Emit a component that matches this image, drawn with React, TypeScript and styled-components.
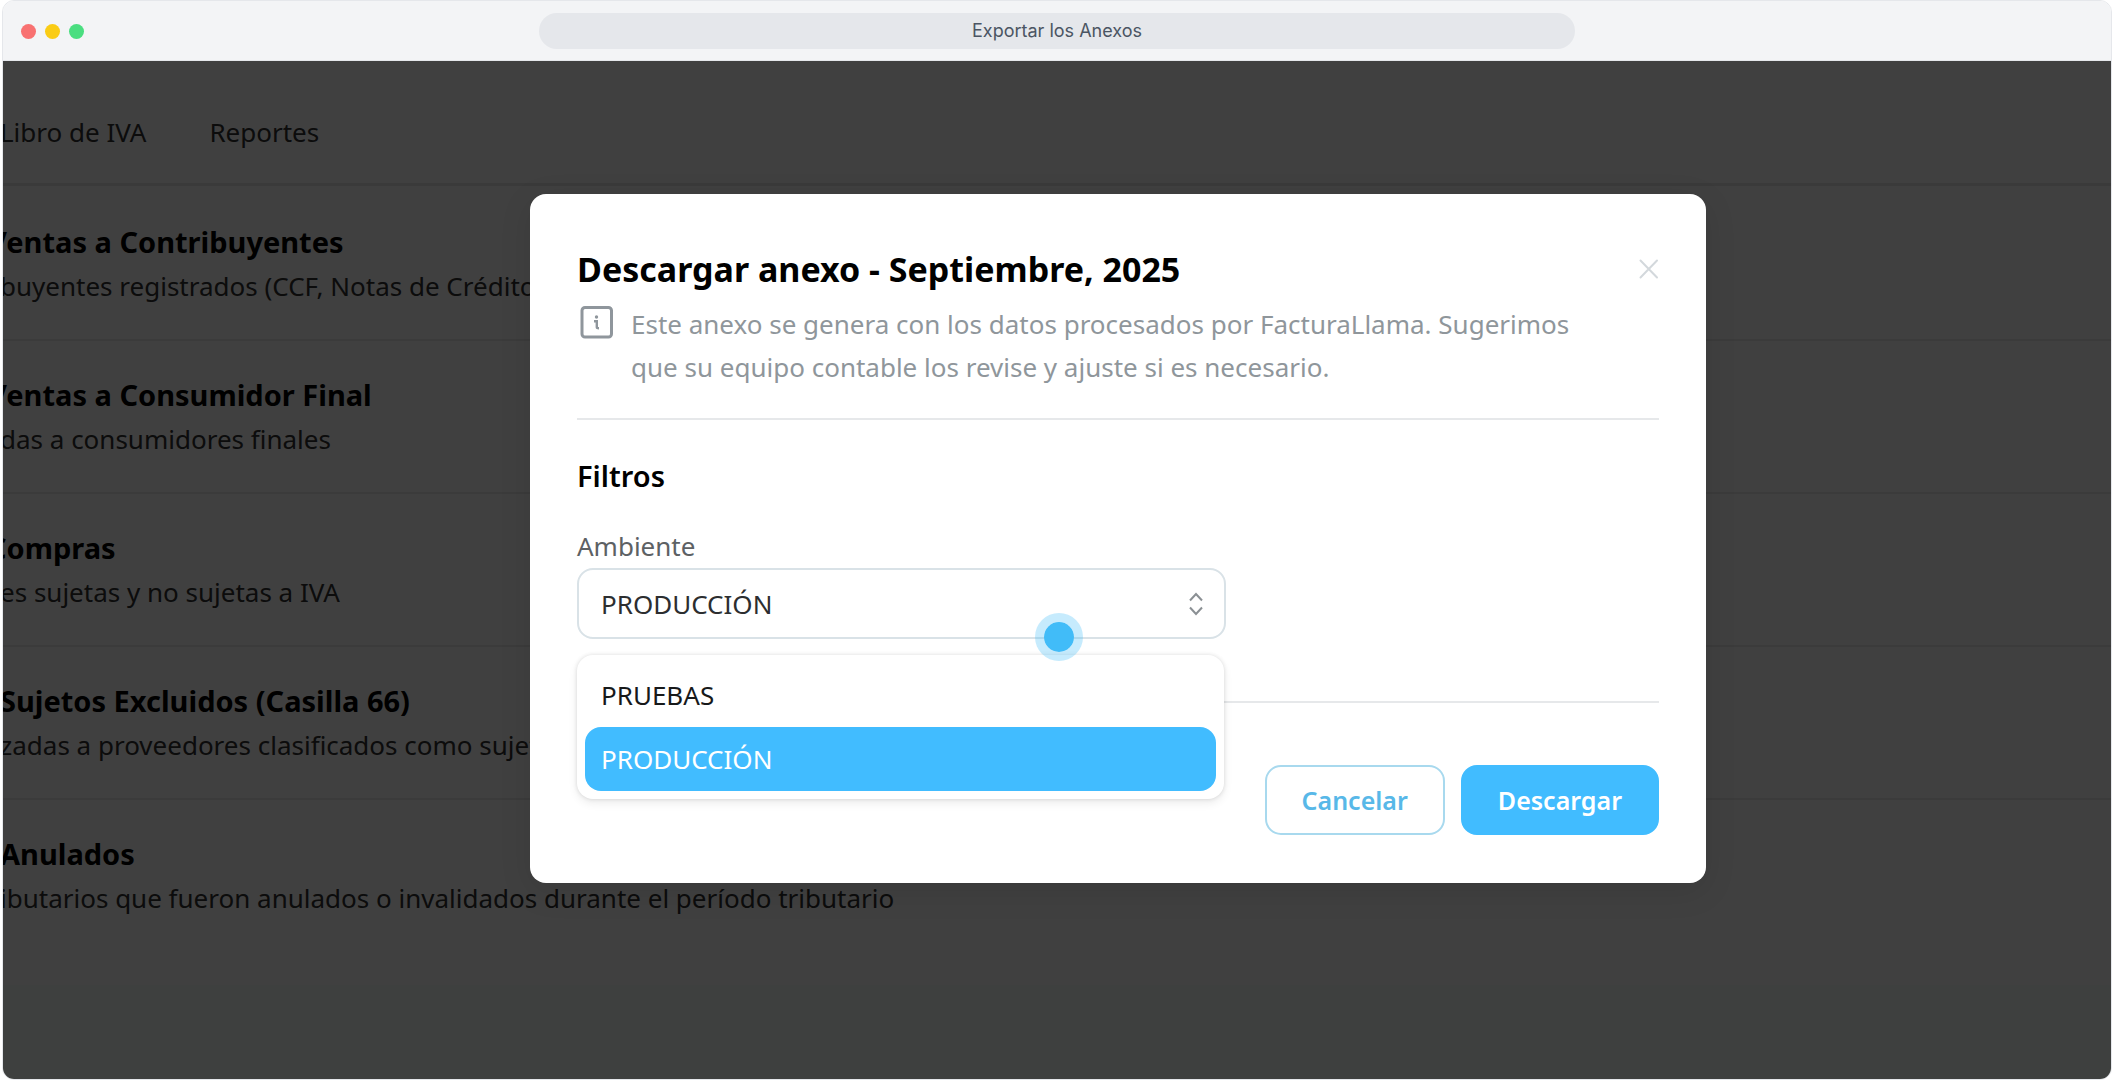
import React, { useState } from "react";
import styled, { createGlobalStyle, css } from "styled-components";

const GlobalStyle = createGlobalStyle`
  *, *::before, *::after { box-sizing: border-box; }
  body {
    margin: 0;
    background: #ffffff;
    color: #000000;
    font-family: "Noto Sans", "Open Sans", sans-serif;
  }
  h1, h2, h3, p, ul { margin: 0; padding: 0; }
  button, select { font-family: inherit; }
`;

const BLUE = "#41bcff";

const Frame = styled.div`
  display: flex;
  flex-direction: column;
  height: 100vh;
  min-height: 960px;
  margin: 0 2px;
  border: 1px solid #e5e7eb;
  border-radius: 12px;
  overflow: hidden;
`;

const TitleBar = styled.header`
  display: grid;
  grid-template-columns: 1fr minmax(0, 1036px) 1fr;
  align-items: center;
  padding: 12px 18px 11px;
  background: #f3f4f6;
  border-bottom: 1px solid #e5e7eb;
  flex: none;
`;

const Lights = styled.div`
  display: flex;
  gap: 9px;
`;

const Light = styled.span<{ $color: string }>`
  width: 15px;
  height: 15px;
  border-radius: 50%;
  background: ${(p) => p.$color};
`;

const Address = styled.div`
  height: 36px;
  border-radius: 18px;
  background: #e5e7eb;
  color: #4b5563;
  font: 400 18px/36px Inter, sans-serif;
  text-align: center;
`;

const Viewport = styled.div`
  position: relative;
  flex: 1;
  display: flex;
  flex-direction: column;
  overflow: hidden;
`;

/* The page is panned to the right, so its text can start left of the pane. */
const Page = styled.div`
  flex: 1;
  display: flex;
  flex-direction: column;
  margin-left: -3px;
  background: #ffffff;
`;

const Nav = styled.nav`
  display: flex;
  align-items: center;
  gap: 63px;
  height: 125px;
  padding-top: 20px;
  border-bottom: 3px solid #e8e8e8;
`;

const NavLink = styled.a`
  color: #303030;
  font-size: 26px;
  line-height: 44px;
  text-decoration: none;
  white-space: nowrap;
`;

const Annexes = styled.ul`
  list-style: none;
  height: 799px;
`;

const Annex = styled.li`
  height: 153px;
  padding-top: 34px;
  white-space: nowrap;

  & + & {
    padding-top: 32px;
    border-top: 2px solid #ececec;
  }
`;

const AnnexTitle = styled.h3<{ $hidden: number }>`
  margin-left: ${(p) => -p.$hidden}px;
  font-size: 29px;
  line-height: 44px;
  font-weight: 700;
`;

const AnnexText = styled.p`
  color: #303030;
  font-size: 26px;
  line-height: 44px;
`;

const PageFooter = styled.footer`
  flex: 1;
  background: #f8fffc;
`;

const Overlay = styled.div`
  position: absolute;
  inset: 0;
  padding: 133px 19% 0 25%;
  background: rgba(0, 0, 0, 0.75);
`;

const Dialog = styled.section`
  max-width: 1176px;
  padding: 48px 47px;
  border-radius: 16px;
  background: #ffffff;
  box-shadow: 0 8px 32px rgba(0, 0, 0, 0.1);
`;

const DialogHead = styled.header`
  display: flex;
  align-items: center;
  justify-content: space-between;
`;

const DialogTitle = styled.h1`
  font-size: 34px;
  line-height: 54px;
  font-weight: 700;
`;

const CloseButton = styled.button`
  display: flex;
  padding: 0;
  border: 0;
  background: none;
  color: #d3d8dc;
  cursor: pointer;
`;

const Notice = styled.div`
  display: flex;
  gap: 14px;
  padding: 7px 0 29px;
  border-bottom: 2px solid #e6e8ea;
`;

const NoticeIcon = styled.svg`
  flex: none;
  width: 40px;
  height: 40px;
`;

const NoticeText = styled.p`
  max-width: 940px;
  color: #8f969b;
  font-size: 26px;
  line-height: 43px;
`;

const Filters = styled.div`
  position: relative;
  padding: 34px 0 62px;
  border-bottom: 2px solid #e6e8ea;
`;

const FiltersTitle = styled.h2`
  font-size: 29px;
  line-height: 44px;
  font-weight: 600;
`;

const Field = styled.div`
  position: relative;
  width: 60%;
  margin-top: 27px;
`;

const FieldLabel = styled.label`
  display: block;
  color: #5d6164;
  font-size: 26px;
  line-height: 43px;
`;

const Control = styled.div`
  display: grid;
  align-items: center;

  > * {
    grid-area: 1 / 1;
  }
`;

const Select = styled.select`
  width: 100%;
  height: 71px;
  padding: 0 22px;
  appearance: none;
  border: 2px solid #d9e2e7;
  border-radius: 16px;
  background: #ffffff;
  color: #2c2e30;
  font-size: 26px;
`;

const Arrows = styled.svg`
  justify-self: end;
  width: 16px;
  height: 24px;
  margin-right: 22px;
  pointer-events: none;
`;

const Menu = styled.ul`
  position: absolute;
  top: 100%;
  left: 0;
  right: 2px;
  margin-top: 16px;
  padding: 8px;
  list-style: none;
  border-radius: 16px;
  background: #ffffff;
  box-shadow: 0 0 4px rgba(0, 0, 0, 0.12), 0 4px 10px rgba(0, 0, 0, 0.08);
`;

const Option = styled.button<{ $selected: boolean }>`
  display: block;
  width: 100%;
  height: 64px;
  padding: 0 16px;
  border: 0;
  border-radius: 16px;
  background: ${(p) => (p.$selected ? BLUE : "transparent")};
  color: ${(p) => (p.$selected ? "#ffffff" : "#17191a")};
  font-size: 26px;
  text-align: left;
  cursor: pointer;
`;

const Pointer = styled.span`
  position: absolute;
  right: 143px;
  bottom: -22px;
  z-index: 2;
  width: 48px;
  height: 48px;
  border: 9px solid rgba(65, 188, 248, 0.3);
  border-radius: 50%;
  background: #41bcf8;
  background-clip: padding-box;
  pointer-events: none;
`;

const Actions = styled.footer`
  display: flex;
  justify-content: flex-end;
  gap: 16px;
  padding-top: 62px;
`;

const Action = styled.button<{ $primary?: boolean }>`
  height: 70px;
  padding: 0 35px;
  border: 2px solid #a8d9ee;
  border-radius: 16px;
  background: #ffffff;
  color: #58b8e8;
  font-size: 25px;
  font-weight: 600;
  cursor: pointer;

  ${(p) =>
    p.$primary &&
    css`
      border-color: ${BLUE};
      background: ${BLUE};
      color: #ffffff;
    `}
`;

const annexes = [
  {
    title: "Ventas a Contribuyentes",
    hidden: 12,
    text: "buyentes registrados (CCF, Notas de Crédito",
  },
  {
    title: "Ventas a Consumidor Final",
    hidden: 12,
    text: "das a consumidores finales",
  },
  { title: "Compras", hidden: 12, text: "es sujetas y no sujetas a IVA" },
  {
    title: "Sujetos Excluidos (Casilla 66)",
    hidden: 0,
    text: "zadas a proveedores clasificados como sujet",
  },
  {
    title: "Anulados",
    hidden: 0,
    text: "ibutarios que fueron anulados o invalidados durante el período tributario",
  },
];

const environments = ["PRUEBAS", "PRODUCCIÓN"];

export default function App() {
  const [environment, setEnvironment] = useState("PRODUCCIÓN");

  return (
    <>
      <GlobalStyle />
      <Frame>
        <TitleBar>
          <Lights>
            <Light $color="#f87171" />
            <Light $color="#facc15" />
            <Light $color="#4ade80" />
          </Lights>
          <Address>Exportar los Anexos</Address>
        </TitleBar>
        <Viewport>
          <Page>
            <Nav>
              <NavLink href="#libro">Libro de IVA</NavLink>
              <NavLink href="#reportes">Reportes</NavLink>
            </Nav>
            <Annexes>
              {annexes.map((annex) => (
                <Annex key={annex.title}>
                  <AnnexTitle $hidden={annex.hidden}>{annex.title}</AnnexTitle>
                  <AnnexText>{annex.text}</AnnexText>
                </Annex>
              ))}
            </Annexes>
            <PageFooter />
          </Page>
          <Overlay>
            <Dialog role="dialog" aria-labelledby="dialog-title">
              <DialogHead>
                <DialogTitle id="dialog-title">
                  Descargar anexo - Septiembre, 2025
                </DialogTitle>
                <CloseButton aria-label="Cerrar">
                  <svg width="20" height="20" viewBox="0 0 20 20" fill="none">
                    <path
                      d="M1.5 1.5L18 18.5M18 1.5L1.5 18.5"
                      stroke="currentColor"
                      strokeWidth="2"
                      strokeLinecap="round"
                    />
                  </svg>
                </CloseButton>
              </DialogHead>
              <Notice>
                <NoticeIcon viewBox="0 0 40 40" fill="none" aria-hidden="true">
                  <rect
                    x="5"
                    y="4.5"
                    width="29.5"
                    height="29.5"
                    rx="3"
                    stroke="#8f969c"
                    strokeWidth="3"
                  />
                  <circle cx="19.5" cy="14" r="1.7" fill="#8f969c" />
                  <path
                    d="M17 18.2H19.8V24.2Q19.8 25.2 22 25.2"
                    stroke="#8f969c"
                    strokeWidth="2.4"
                  />
                </NoticeIcon>
                <NoticeText>
                  Este anexo se genera con los datos procesados por FacturaLlama.
                  Sugerimos que su equipo contable los revise y ajuste si es
                  necesario.
                </NoticeText>
              </Notice>
              <Filters>
                <FiltersTitle>Filtros</FiltersTitle>
                <Field>
                  <FieldLabel htmlFor="ambiente">Ambiente</FieldLabel>
                  <Control>
                    <Select
                      id="ambiente"
                      value={environment}
                      onChange={(e) => setEnvironment(e.target.value)}
                    >
                      {environments.map((name) => (
                        <option key={name}>{name}</option>
                      ))}
                    </Select>
                    <Arrows viewBox="0 0 16 24" fill="none" aria-hidden="true">
                      <path
                        d="M2 8.5L8 2L14 8.5M2 15.5L8 22L14 15.5"
                        stroke="#8b9094"
                        strokeWidth="2"
                      />
                    </Arrows>
                  </Control>
                  <Menu>
                    {environments.map((name) => (
                      <li key={name}>
                        <Option
                          $selected={name === environment}
                          onClick={() => setEnvironment(name)}
                        >
                          {name}
                        </Option>
                      </li>
                    ))}
                  </Menu>
                  <Pointer />
                </Field>
              </Filters>
              <Actions>
                <Action>Cancelar</Action>
                <Action $primary>Descargar</Action>
              </Actions>
            </Dialog>
          </Overlay>
        </Viewport>
      </Frame>
    </>
  );
}
